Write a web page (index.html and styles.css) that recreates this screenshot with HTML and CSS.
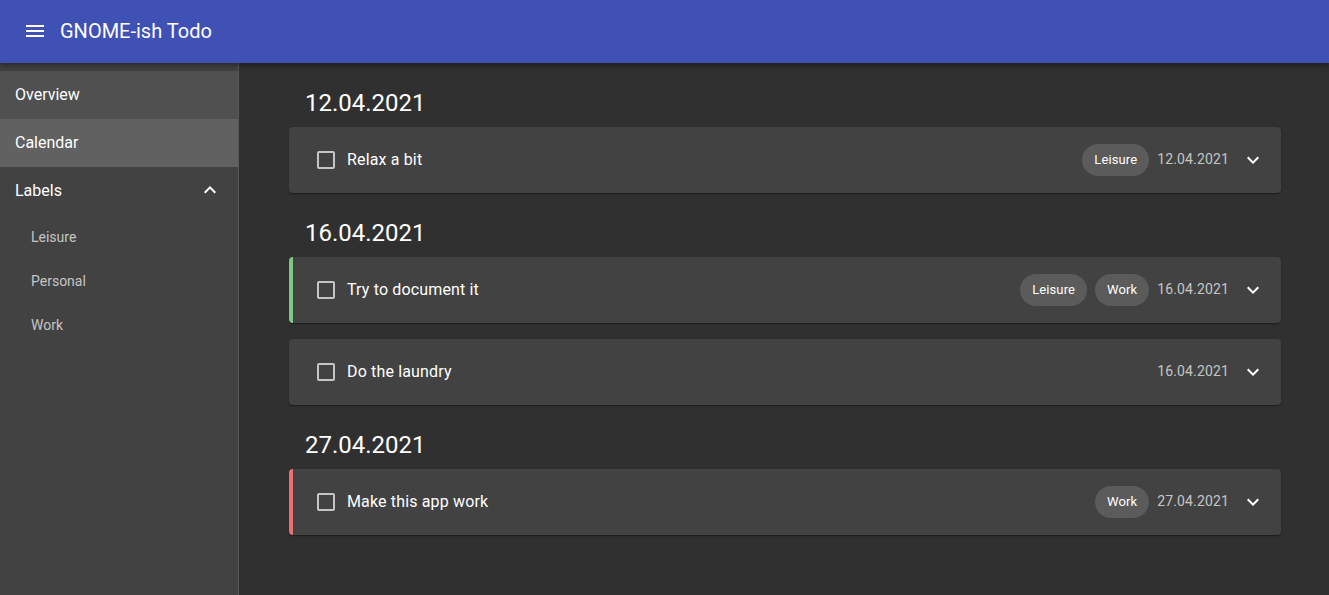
FILE: index.html
```html
<!DOCTYPE html>
<html lang="en">
<head>
<meta charset="utf-8">
<title>GNOME-ish Todo</title>
<link rel="stylesheet" href="styles.css">
</head>
<body>
<header class="appbar">
  <span class="menu-btn">
    <svg viewBox="0 0 24 24" width="24" height="24"><path fill="#fff" d="M3 18h18v-2H3v2zm0-5h18v-2H3v2zm0-7v2h18V6H3z"/></svg>
  </span>
  <h1 class="title">GNOME-ish Todo</h1>
</header>
<div class="layout">
  <nav class="drawer">
    <ul class="nav-list">
      <li class="nav-item selected">Overview</li>
      <li class="nav-item active">Calendar</li>
      <li class="nav-item group">
        <span>Labels</span>
        <svg viewBox="0 0 24 24" width="24" height="24"><path fill="#fff" d="M12 8l-6 6 1.41 1.41L12 10.83l4.59 4.58L18 14z"/></svg>
      </li>
      <li class="nav-sub">Leisure</li>
      <li class="nav-sub">Personal</li>
      <li class="nav-sub">Work</li>
    </ul>
  </nav>
  <main class="main">
    <section class="day">
      <h2 class="day-title">12.04.2021</h2>
      <div class="card">
        <span class="check"></span>
        <span class="task">Relax a bit</span>
        <span class="chips"><span class="chip">Leisure</span></span>
        <span class="date">12.04.2021</span>
        <span class="expand"><svg viewBox="0 0 24 24" width="24" height="24"><path fill="#fff" d="M16.59 8.59L12 13.17 7.41 8.59 6 10l6 6 6-6z"/></svg></span>
      </div>
    </section>
    <section class="day">
      <h2 class="day-title">16.04.2021</h2>
      <div class="card green">
        <span class="check"></span>
        <span class="task">Try to document it</span>
        <span class="chips"><span class="chip">Leisure</span><span class="chip">Work</span></span>
        <span class="date">16.04.2021</span>
        <span class="expand"><svg viewBox="0 0 24 24" width="24" height="24"><path fill="#fff" d="M16.59 8.59L12 13.17 7.41 8.59 6 10l6 6 6-6z"/></svg></span>
      </div>
      <div class="card">
        <span class="check"></span>
        <span class="task">Do the laundry</span>
        <span class="chips"></span>
        <span class="date">16.04.2021</span>
        <span class="expand"><svg viewBox="0 0 24 24" width="24" height="24"><path fill="#fff" d="M16.59 8.59L12 13.17 7.41 8.59 6 10l6 6 6-6z"/></svg></span>
      </div>
    </section>
    <section class="day">
      <h2 class="day-title">27.04.2021</h2>
      <div class="card red">
        <span class="check"></span>
        <span class="task">Make this app work</span>
        <span class="chips"><span class="chip">Work</span></span>
        <span class="date">27.04.2021</span>
        <span class="expand"><svg viewBox="0 0 24 24" width="24" height="24"><path fill="#fff" d="M16.59 8.59L12 13.17 7.41 8.59 6 10l6 6 6-6z"/></svg></span>
      </div>
    </section>
  </main>
</div>
</body>
</html>
```

FILE: styles.css
```css
* { box-sizing: border-box; }
html, body {
  margin: 0;
  height: 100%;
}
body {
  font-family: Roboto, "Liberation Sans", sans-serif;
  background: #303030;
  color: #fff;
  display: flex;
  flex-direction: column;
  overflow: hidden;
}
.appbar {
  height: 63px;
  flex: none;
  background: #3f51b5;
  display: flex;
  align-items: center;
  padding: 0 0 1px 23px;
  box-shadow: 0 2px 4px -1px rgba(0,0,0,0.2), 0 4px 5px 0 rgba(0,0,0,0.14), 0 1px 10px 0 rgba(0,0,0,0.12);
  position: relative;
  z-index: 2;
}
.menu-btn {
  display: flex;
  width: 24px;
  height: 24px;
  margin-right: 13px;
}
.title {
  margin: 0;
  font-size: 20px;
  font-weight: 400;
  line-height: 1.6;
}
.layout {
  flex: 1;
  display: flex;
  min-height: 0;
}
.drawer {
  width: 239px;
  flex: none;
  background: #424242;
  border-right: 1px solid rgba(255,255,255,0.12);
}
.nav-list {
  list-style: none;
  margin: 0;
  padding: 8px 0 0;
}
.nav-item {
  height: 48px;
  display: flex;
  align-items: center;
  justify-content: space-between;
  padding: 0 16px 2px 15px;
  font-size: 16px;
  color: #fff;
}
.nav-item.selected { background: #505050; }
.nav-item.active { background: #616161; }
.nav-sub {
  height: 44px;
  display: flex;
  align-items: center;
  padding-left: 31px;
  font-size: 14px;
  color: rgba(255,255,255,0.7);
}
.main {
  flex: 1;
  display: flex;
  flex-direction: column;
  padding: 16px 48px 0 50px;
}
.day {
  display: flex;
  flex-direction: column;
}
.day-title {
  margin: 8px 0 8px 16px;
  font-size: 24px;
  font-weight: 400;
  line-height: 32px;
}
.card {
  height: 66px;
  flex: none;
  margin-bottom: 16px;
  background: #424242;
  border-radius: 4px;
  border-left: 4px solid transparent;
  padding: 0 16px 0 12px;
  display: flex;
  align-items: center;
  box-shadow: 0 2px 1px -1px rgba(0,0,0,0.2), 0 1px 1px 0 rgba(0,0,0,0.14), 0 1px 3px 0 rgba(0,0,0,0.12);
}
.card.green { border-left-color: #81c784; }
.card.red { border-left-color: #e57373; }
.check {
  width: 18px;
  height: 18px;
  margin: 0 12px 0 12px;
  border: 2px solid rgba(255,255,255,0.7);
  border-radius: 2px;
  flex: none;
}
.task {
  font-size: 16px;
  letter-spacing: 0.15px;
  flex: 1;
  margin-bottom: 2px;
}
.chips {
  display: flex;
  gap: 8px;
  margin-right: 8px;
}
.chip {
  height: 32px;
  padding: 0 12px 1px;
  border-radius: 16px;
  background: #5b5b5b;
  font-size: 13px;
  letter-spacing: 0.1px;
  display: flex;
  align-items: center;
}
.date {
  font-size: 14px;
  letter-spacing: 0.15px;
  color: rgba(255,255,255,0.7);
  margin-bottom: 2px;
}
.expand {
  width: 48px;
  height: 48px;
  margin-right: -12px;
  display: flex;
  align-items: center;
  justify-content: center;
}
```
